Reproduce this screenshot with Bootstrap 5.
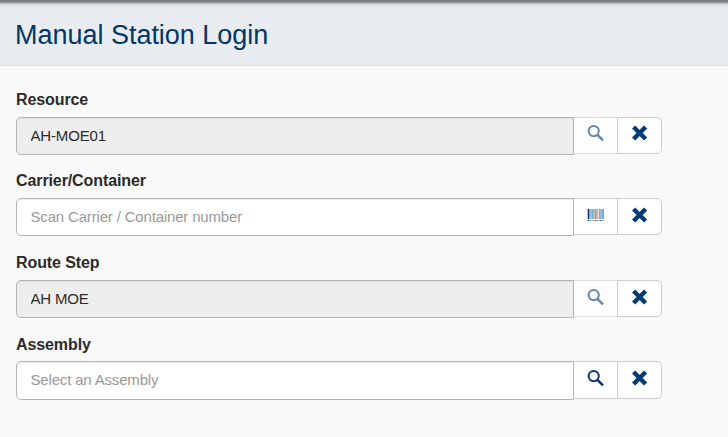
<!DOCTYPE html>
<html lang="en">
<head>
<meta charset="utf-8">
<meta name="viewport" content="width=device-width, initial-scale=1">
<title>Manual Station Login</title>
<link href="https://cdn.jsdelivr.net/npm/bootstrap@5.3.0/dist/css/bootstrap.min.css" rel="stylesheet">
<style>
body{font-family:"Liberation Sans",Arial,sans-serif;background:#f9f9f9;color:#2b2b2b;height:437px;overflow:hidden}
.page-head{height:66px;padding:4px 0 0 15px;border-bottom:1px solid #dcdfe2;background:linear-gradient(#77787b 0,#77787b 1px,#85878a 2px,#b0b2b6 3px,#cbced3 4px,#dde0e5 5px,#e5e8ed 7px,#e8ebf0 9px)}
.page-head h1{font-size:27px;line-height:32px;letter-spacing:-.02px;color:#003767}
.station-form{padding:24px 0 0 16px;width:662px}
.field-row{height:81px}
.field-row:nth-child(2){height:82px}
.field-row .form-label{font-size:16px;line-height:20px;height:20px;font-weight:700;letter-spacing:-.1px;margin-bottom:7px}
.field-row:last-child .form-label{padding-top:1px}
.field-row .form-control{position:relative;z-index:3;height:38px;font-size:15px;line-height:20px;letter-spacing:-.17px;padding:7px 14px 9px 13.5px;border:1px solid #b2b5b9;border-radius:5px;color:#2b2b2b;background:#fff;box-shadow:inset 0 1px 1px rgba(0,0,0,.075)}
.field-row:last-child .form-control{height:39px;padding-bottom:10px}
.field-row:last-child .btn{height:38px}
.field-row .form-control::placeholder{color:#999;opacity:1}
.field-row .form-control[readonly]{background:#eee}
.field-row .btn{display:flex;align-items:flex-start;width:45px;height:37px;padding:7px 0 0 13px;background:#fff;border:1px solid #ccc;border-radius:5px;color:#003c71}
.field-row:first-child .btn{padding-top:6px}
.field-row .btn.scan{padding-top:10px}
.field-row .btn:disabled{opacity:1;background:#fdfdfd;border-color:#dedede;color:#6488ac}
</style>
<script src="https://cdn.jsdelivr.net/npm/bootstrap@5.3.0/dist/js/bootstrap.bundle.min.js"></script>
</head>
<body>
<svg class="d-none">
<symbol id="search" viewBox="0 0 18 18"><circle cx="6.7" cy="7.1" r="5.1" fill="none" stroke="currentColor" stroke-width="2"/><path d="M10.2 10.6 16 16.3" fill="none" stroke="currentColor" stroke-width="2.5"/></symbol>
<symbol id="clear" viewBox="0 0 18 18"><path d="M2.6 3 14.6 15M14.6 3 2.6 15" fill="none" stroke="currentColor" stroke-width="4.5"/></symbol>
<symbol id="barcode" viewBox="0 0 17 12" shape-rendering="crispEdges">
<path fill="#e3b08f" d="M0 0h1v10H0zM4 0h1v10H4zM7 0h1v10H7zM10 0h1v10h-1zM14 0h1v10h-1z"/>
<path fill="#003c71" d="M1 0h1v10H1z"/>
<path fill="#62b5e5" d="M2 0h1v10H2zM5 0h1v10H5zM8 0h1v10H8zM12 0h1v10h-1zM15 0h2v10h-2z"/>
<path fill="#a9b5c8" d="M3 0h1v10H3zM6 0h1v10H6zM9 0h1v10H9zM13 0h1v10h-1z"/>
<path fill="#f6e6d2" d="M11 0h1v10h-1z"/>
<path fill="#a5b2b8" d="M0 11h17v1H0z"/><path fill="#174f80" d="M1 11h1v1H1zM8 11h1v1H8zM13 11h1v1h-1z"/><path fill="#62b5e5" d="M3 11h1v1H3zM6 11h1v1H6zM10 11h1v1h-1zM16 11h1v1h-1z"/><path fill="#e3b08f" d="M0 11h1v1H0zM5 11h1v1H5zM12 11h1v1h-1z"/>
</symbol>
</svg>
<header class="page-head d-flex align-items-center"><h1 class="m-0 fw-normal">Manual Station Login</h1></header>
<main class="station-form">
<div class="field-row"><label class="form-label d-block" for="resource">Resource</label>
<div class="input-group flex-nowrap align-items-start"><input id="resource" class="form-control" value="AH-MOE01" readonly><button class="btn" disabled aria-label="Search"><svg width="18" height="18"><use href="#search"/></svg></button><button class="btn" aria-label="Clear"><svg width="18" height="18"><use href="#clear"/></svg></button></div></div>
<div class="field-row"><label class="form-label d-block" for="carrier">Carrier/Container</label>
<div class="input-group flex-nowrap align-items-start"><input id="carrier" class="form-control" placeholder="Scan Carrier / Container number"><button class="btn scan" aria-label="Scan"><svg width="17" height="12"><use href="#barcode"/></svg></button><button class="btn" aria-label="Clear"><svg width="18" height="18"><use href="#clear"/></svg></button></div></div>
<div class="field-row"><label class="form-label d-block" for="route">Route Step</label>
<div class="input-group flex-nowrap align-items-start"><input id="route" class="form-control" value="AH MOE" readonly><button class="btn" disabled aria-label="Search"><svg width="18" height="18"><use href="#search"/></svg></button><button class="btn" aria-label="Clear"><svg width="18" height="18"><use href="#clear"/></svg></button></div></div>
<div class="field-row"><label class="form-label d-block" for="assembly">Assembly</label>
<div class="input-group flex-nowrap align-items-start"><input id="assembly" class="form-control" placeholder="Select an Assembly"><button class="btn" aria-label="Search"><svg width="18" height="18"><use href="#search"/></svg></button><button class="btn" aria-label="Clear"><svg width="18" height="18"><use href="#clear"/></svg></button></div></div>
</main>
</body>
</html>
